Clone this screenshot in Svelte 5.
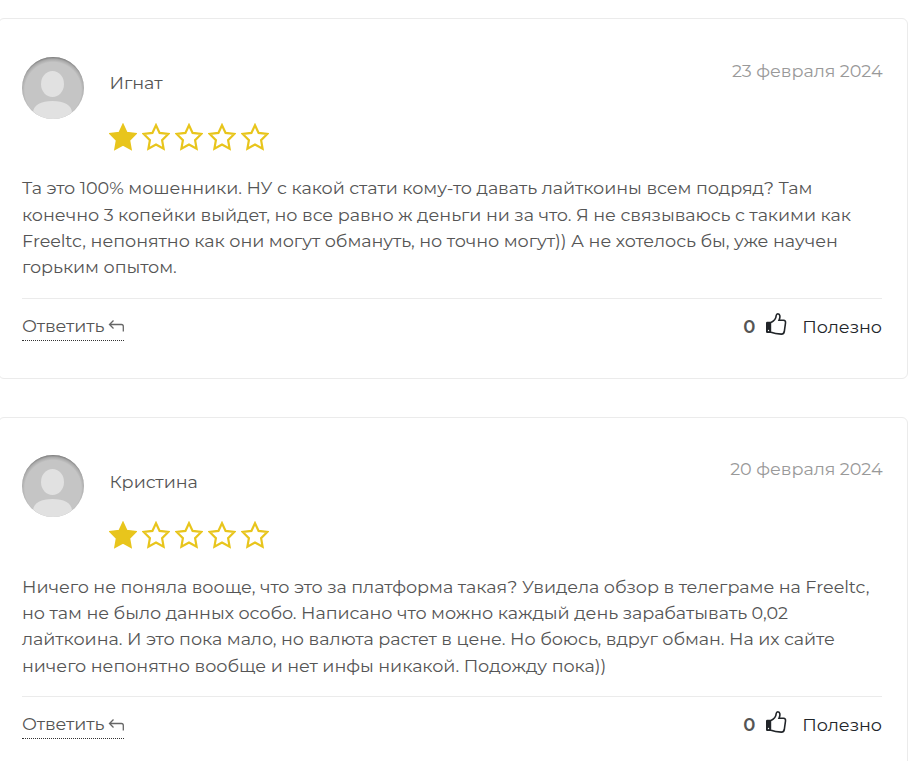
<script>
	const reviews = [
		{
			name: 'Игнат',
			date: '23 февраля 2024',
			lines: [
				'Та это 100% мошенники. НУ с какой стати кому-то давать лайткоины всем подряд? Там',
				'конечно 3 копейки выйдет, но все равно ж деньги ни за что. Я не связываюсь с такими как',
				'Freeltc, непонятно как они могут обмануть, но точно могут)) А не хотелось бы, уже научен',
				'горьким опытом.'
			],
			rating: 1,
			likes: 0
		},
		{
			name: 'Кристина',
			date: '20 февраля 2024',
			lines: [
				'Ничего не поняла вооще, что это за платформа такая? Увидела обзор в телеграме на Freeltc,',
				'но там не было данных особо. Написано что можно каждый день зарабатывать 0,02',
				'лайткоина. И это пока мало, но валюта растет в цене. Но боюсь, вдруг обман. На их сайте',
				'ничего непонятно вообще и нет инфы никакой. Подожду пока))'
			],
			rating: 1,
			likes: 0
		}
	]
</script>

<main class="reviews">
	{#each reviews as review}
		<article class="review">
			<header class="review__head">
				<svg class="avatar" viewBox="0 0 62 62" aria-hidden="true">
					<defs>
						<clipPath id="avatar-clip"><circle cx="31" cy="31" r="31" /></clipPath>
						<radialGradient id="avatar-shade" gradientUnits="userSpaceOnUse" cx="31" cy="33.5" r="34">
							<stop offset="0.83" stop-color="#777" stop-opacity="0" />
							<stop offset="0.92" stop-color="#777" stop-opacity="0.35" />
							<stop offset="1" stop-color="#666" stop-opacity="0.95" />
						</radialGradient>
					</defs>
					<g clip-path="url(#avatar-clip)">
						<rect width="62" height="62" fill="#c5c5c5" />
						<ellipse cx="30.5" cy="27" rx="11.5" ry="13" fill="#e1e1e1" />
						<path d="M11 56C11 48 19 44 30.5 44S50 48 50 56V63H11Z" fill="#e1e1e1" />
						<rect width="62" height="62" fill="url(#avatar-shade)" />
					</g>
				</svg>
				<div class="review__author">
					<div class="name">{review.name}</div>
					<div class="stars">
						{#each [1, 2, 3, 4, 5] as n}
							<svg class="star" class:star--full={n <= review.rating} viewBox="0 0 28 28">
								<path d="M14 2.2L17.6 9.9L26.3 11L20.1 17.1L21.6 25.8L14 21.6L6.4 25.8L7.9 17.1L1.7 11L10.4 9.9Z" />
							</svg>
						{/each}
					</div>
				</div>
				<time class="date">{review.date}</time>
			</header>

			<p class="text">
				{#each review.lines as line}
					<span class="line">{line}</span>
				{/each}
			</p>

			<footer class="review__foot">
				<button class="reply">
					<span>Ответить</span>
					<svg class="reply__icon" viewBox="0 0 16 14">
						<path d="M5.5 1.5L1.5 5.5L5.5 9.5M1.5 5.5H13.5Q15.3 5.5 15.3 7.5V12.5" />
					</svg>
				</button>
				<button class="useful">
					<b>{review.likes}</b>
					<svg class="useful__icon" viewBox="0 0 22 24">
						<path class="cuff" d="M2.2 9.7H6.2V21H2.2Q1 21 1 19.8V11Q1 9.7 2.2 9.7Z" />
						<path d="M6 10.5C9 9 11 6.5 11.2 3.5Q11.4 1.7 12.8 1.7C15.3 1.8 15.5 5 14 8.3H18.5Q20.8 8.5 20.5 11L19.3 19.5Q18.8 22.2 16.3 22.1Q10 22 6 20.3" />
						<circle cx="3.5" cy="18.5" r="0.7" />
					</svg>
					<span>Полезно</span>
				</button>
			</footer>
		</article>
	{/each}
</main>

<style>
	:global(body) {
		margin: 0;
		background: #fff;
		overflow: hidden;
	}

	.reviews {
		display: flex;
		flex-direction: column;
		gap: 38px;
		height: 761px;
		padding-top: 18.4px;
		box-sizing: border-box;
		overflow: hidden;
		font-family: Montserrat, Inter, 'Open Sans', sans-serif;
		font-size: 17.6px;
		font-weight: 400;
		line-height: 26.4px;
		letter-spacing: -0.053px;
		color: #555;
	}

	.review {
		flex: none;
		width: 910px;
		height: 360.4px;
		margin-left: -2px;
		padding: 37.5px 25px 0 23px;
		box-sizing: border-box;
		border: 1px solid #ebebeb;
		border-radius: 6px;
	}

	.review__head {
		display: flex;
		height: 118.3px;
	}

	.avatar {
		width: 62px;
		height: 62px;
		margin-right: 25.5px;
	}

	.review__author {
		flex: 1;
		padding-top: 13.4px;
	}

	.name,
	.line,
	.date {
		display: block;
		white-space: nowrap;
	}

	.stars {
		display: flex;
		gap: 5px;
		margin: 26.2px 0 0 -0.5px;
	}

	.star {
		width: 28px;
		height: 28px;
		fill: none;
		stroke: #e8c51c;
		stroke-width: 2.2;
	}

	.star--full {
		fill: #e8c51c;
	}

	.date {
		margin-right: -0.5px;
		padding-top: 0.7px;
		color: #999;
	}

	.text {
		height: 105.6px;
		margin: 0;
	}

	.review__foot {
		display: flex;
		justify-content: space-between;
		align-items: flex-start;
		margin-top: 17px;
		padding-top: 14px;
		border-top: 1px solid #ebebeb;
	}

	button {
		display: flex;
		align-items: center;
		padding: 0;
		border: none;
		background: none;
		font: inherit;
		letter-spacing: inherit;
		color: inherit;
	}

	.reply {
		gap: 4px;
		height: 28px;
		border-bottom: 1px dotted #333;
	}

	.reply__icon {
		width: 16px;
		height: 14px;
		fill: none;
		stroke: #666;
		stroke-width: 1.3;
	}

	.useful {
		height: 28px;
		margin-top: 0.5px;
		color: #212529;
	}

	.useful b {
		font-weight: 600;
		font-size: 18px;
		color: #555;
	}

	.useful__icon {
		width: 22px;
		height: 24px;
		margin: -7px 15px 0 10px;
		fill: none;
		stroke: #212529;
		stroke-width: 1.6;
	}

	.useful__icon .cuff {
		fill: #212529;
		stroke: none;
	}

	.useful__icon circle {
		fill: #fff;
		stroke: none;
	}
</style>
